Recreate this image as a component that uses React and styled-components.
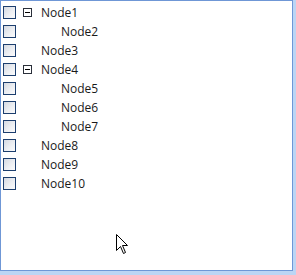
import React from "react";
import styled, { createGlobalStyle } from "styled-components";

const GlobalStyle = createGlobalStyle`
  html, body {
    margin: 0;
    padding: 0;
    background: #bcd5f4;
  }
  body {
    width: 296px;
    height: 275px;
    overflow: hidden;
  }
`;

const nodes = [
  { label: "Node1", level: 0, expanded: true },
  { label: "Node2", level: 1 },
  { label: "Node3", level: 0 },
  { label: "Node4", level: 0, expanded: true },
  { label: "Node5", level: 1 },
  { label: "Node6", level: 1 },
  { label: "Node7", level: 1 },
  { label: "Node8", level: 0 },
  { label: "Node9", level: 0 },
  { label: "Node10", level: 0 }
];

const App = () => {
  return (
    <>
      <GlobalStyle />
      <TreeFrame>
        <TreeList>
          {nodes.map(node => (
            <Row key={node.label}>
              <CheckBox />
              <Indent level={node.level} />
              <ExpanderSlot>{node.expanded && <Expander />}</ExpanderSlot>
              <Label>{node.label}</Label>
            </Row>
          ))}
        </TreeList>
        <Cursor width="13" height="21" viewBox="0 0 13 21">
          <path
            d="M0.5 0.5 L0.5 16.5 L4.5 12.5 L7.5 19.5 L9.5 18.5 L6.5 11.5 L11.5 11.5 Z"
            fill="#fff"
            stroke="#000"
            strokeWidth="1"
          />
        </Cursor>
      </TreeFrame>
    </>
  );
};

const TreeFrame = styled.div`
  position: relative;
  box-sizing: border-box;
  width: 293px;
  height: 271px;
  background: #fff;
  border: 1px solid #6f97d6;
`;

const TreeList = styled.div`
  display: flex;
  flex-direction: column;
  padding: 2px 0 0 2px;
`;

const Row = styled.div`
  display: flex;
  align-items: center;
  height: 19px;
`;

const CheckBox = styled.span`
  box-sizing: border-box;
  width: 13px;
  height: 13px;
  border: 1px solid #1c3e6e;
  background: linear-gradient(135deg, #d5d9e1 0%, #eceef2 55%, #fbfbfc 100%);
  flex-shrink: 0;
`;

const Indent = styled.span`
  width: ${p => p.level * 20}px;
  flex-shrink: 0;
`;

const ExpanderSlot = styled.span`
  display: flex;
  align-items: center;
  width: 25px;
  padding-left: 7px;
  box-sizing: border-box;
  flex-shrink: 0;
`;

const Expander = styled.span`
  position: relative;
  box-sizing: border-box;
  width: 9px;
  height: 9px;
  border: 1px solid #2a2f3a;
  background: #fff;

  &::after {
    content: "";
    position: absolute;
    left: 1px;
    top: 3px;
    width: 5px;
    height: 1px;
    background: #000;
  }
`;

const Label = styled.span`
  font-family: "Open Sans", "Liberation Sans", sans-serif;
  font-size: 12px;
  color: #1a1a1a;
  line-height: 19px;
`;

const Cursor = styled.svg`
  position: absolute;
  left: 115px;
  top: 233px;
`;

export default App;
